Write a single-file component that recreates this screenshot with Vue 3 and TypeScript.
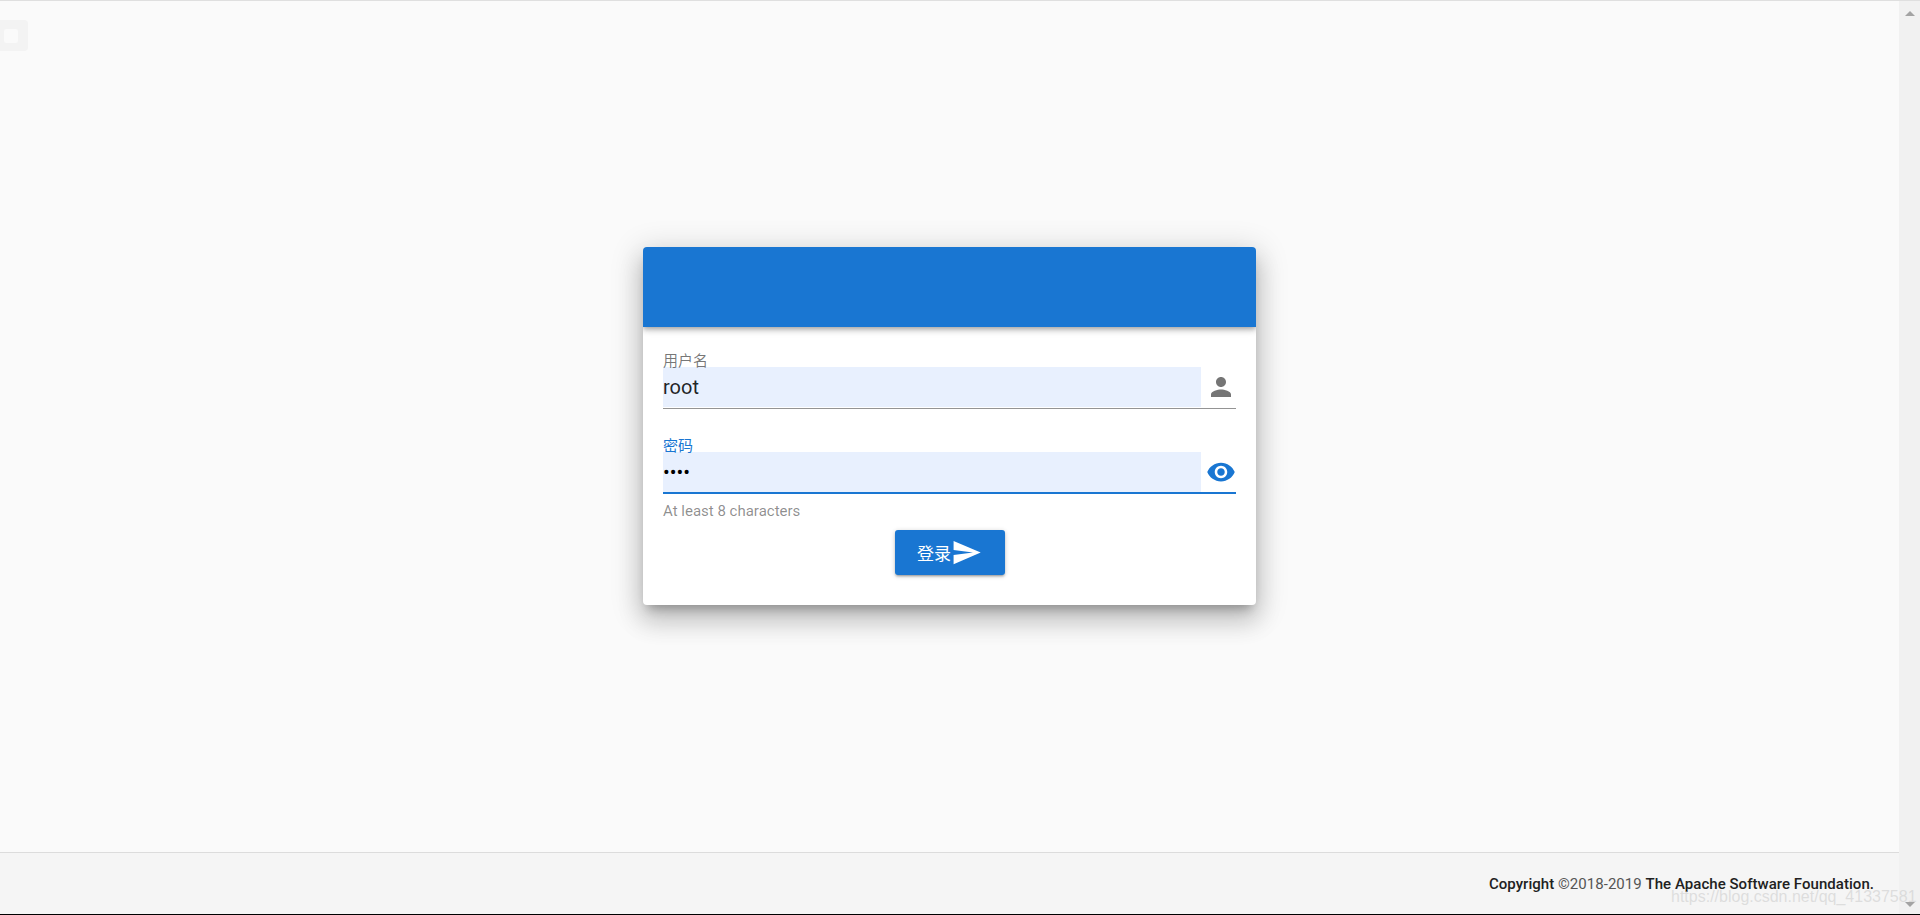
<script setup lang="ts">
const username = 'root'
const copyrightYears = '©2018-2019'
</script>

<template>
  <div class="window">
    <div class="page">
      <div class="main">
        <div class="drawer-tab"><span class="drawer-dot"></span></div>
        <section class="card">
          <header class="card-head"></header>
          <div class="card-body">
            <div class="field">
              <span class="label">用户名</span>
              <div class="control">
                <input class="input" :value="username" readonly />
                <span class="append">
                  <svg class="icon" viewBox="0 0 24 24"><path fill="#757575" d="M12 12c2.21 0 4-1.79 4-4s-1.79-4-4-4-4 1.79-4 4 1.79 4 4 4zm0 2c-2.67 0-8 1.34-8 4v2h16v-2c0-2.66-5.33-4-8-4z"/></svg>
                </span>
              </div>
            </div>
            <div class="field focused">
              <span class="label">密码</span>
              <div class="control">
                <input class="input dots" value="••••" readonly />
                <span class="append">
                  <svg class="icon" viewBox="0 0 24 24"><path fill="#1976d2" d="M12 4.5C7 4.5 2.73 7.61 1 12c1.73 4.39 6 7.5 11 7.5s9.27-3.11 11-7.5c-1.73-4.39-6-7.5-11-7.5zM12 17c-2.76 0-5-2.24-5-5s2.24-5 5-5 5 2.24 5 5-2.24 5-5 5zm0-8c-1.66 0-3 1.34-3 3s1.34 3 3 3 3-1.34 3-3-1.34-3-3-3z"/></svg>
                </span>
              </div>
            </div>
            <div class="hint">At least 8 characters</div>
            <div class="actions">
              <button class="submit" type="button">
                <span>登录</span>
                <svg class="send" viewBox="0 0 24 24"><path fill="#fff" d="M2.01 21L23 12 2.01 3 2 10l15 2-15 2z"/></svg>
              </button>
            </div>
          </div>
        </section>
      </div>
      <footer class="footer">
        <strong>Copyright</strong>&nbsp;<span>{{ copyrightYears }}</span>&nbsp;<strong>The Apache Software Foundation.</strong>
      </footer>
    </div>
    <aside class="scrollbar">
      <span class="arrow up"></span>
      <span class="arrow down"></span>
    </aside>
    <div class="watermark">https://blog.csdn.net/qq_41337581</div>
  </div>
</template>

<style>
html, body { margin: 0; overflow: hidden; }
</style>

<style scoped>
.window {
  position: relative;
  display: flex;
  height: 915px;
  box-sizing: border-box;
  border-top: 1px solid #dfdfdf;
  border-bottom: 1px solid #000;
  background: #fafafa;
  font-family: Roboto, "Noto Sans CJK SC", sans-serif;
  overflow: hidden;
}
.page { flex: 1; display: flex; flex-direction: column; min-width: 0; }
.main { flex: 1; position: relative; display: flex; align-items: center; justify-content: center; padding-bottom: 1px; }
.drawer-tab {
  position: absolute; left: 0; top: 19px; width: 28px; height: 31px;
  background: #f3f3f3; border-radius: 0 4px 4px 0;
  display: flex; align-items: center; padding-left: 4px; box-sizing: border-box;
}
.drawer-dot { width: 14px; height: 14px; background: #fafafa; border-radius: 2px; }
.card {
  width: 613px; background: #fff; border-radius: 4px; overflow: hidden;
  box-shadow: 0 8px 10px -5px rgba(0,0,0,.28), 0 16px 24px 2px rgba(0,0,0,.14), 0 6px 30px 5px rgba(0,0,0,.14);
}
.card-head {
  height: 80px; background: #1976d2; position: relative;
  box-shadow: 0 2px 4px -1px rgba(0,0,0,.2), 0 4px 5px rgba(0,0,0,.14), 0 1px 10px rgba(0,0,0,.12);
}
.card-body { padding: 40px 20px 30px; }
.field { position: relative; margin-bottom: 43px; color: rgba(0,0,0,.54); }
.field.focused { margin-bottom: 0; color: #1976d2; }
.label { position: absolute; left: 0; top: -15px; font-size: 15px; line-height: 18px; }
.control { display: flex; height: 42px; box-sizing: border-box; border-bottom: 1px solid #949494; padding-bottom: 1px; }
.focused .control { border-bottom: 2px solid #1976d2; padding-bottom: 0; }
.input {
  flex: 1; min-width: 0; height: 40px; box-sizing: border-box; padding: 0; border: 0; outline: 0;
  background: #e8f0fe; color: rgba(0,0,0,.87); font: 20px/40px Roboto, sans-serif;
}
.dots { color: #000; }
.append { width: 35px; display: flex; align-items: center; justify-content: flex-end; height: 40px; }
.icon { width: 30px; height: 30px; display: block; flex: none; }
.hint { font-size: 15px; line-height: 20px; margin-top: 7px; color: rgba(0,0,0,.45); }
.actions { display: flex; justify-content: center; margin-top: 9px; }
.submit {
  width: 110px; height: 45px; display: flex; align-items: center; justify-content: center; padding: 0;
  border: 0; border-radius: 3px; background: #1976d2; color: #fff;
  font: 400 17px "Noto Sans CJK SC", sans-serif;
  box-shadow: 0 1px 5px rgba(0,0,0,.2), 0 2px 2px rgba(0,0,0,.14), 0 3px 1px -2px rgba(0,0,0,.12);
}
.send { width: 31px; height: 31px; }
.footer {
  height: 62px; box-sizing: border-box; border-top: 1px solid #dcdcdc; background: #f5f5f5;
  display: flex; align-items: center; justify-content: flex-end; padding: 0 25px 0 0;
  font-size: 15px; letter-spacing: .04px; color: #212121;
}
.footer strong { font-weight: 500; }
.footer span { color: #555; font-weight: 400; }
.scrollbar {
  width: 21px; background: #f1f1f1; display: flex; flex-direction: column;
  justify-content: space-between; align-items: center; padding: 10px 0 7px; box-sizing: border-box;
}
.arrow { width: 0; height: 0; border-left: 5px solid transparent; border-right: 5px solid transparent; }
.arrow.up { border-bottom: 5px solid #a3a3a3; }
.arrow.down { border-top: 5px solid #a3a3a3; }
.watermark {
  position: absolute; left: 1671px; top: 886px; font: 16px/20px "Liberation Sans", sans-serif;
  color: rgba(205,205,205,.6); white-space: nowrap;
}
</style>
